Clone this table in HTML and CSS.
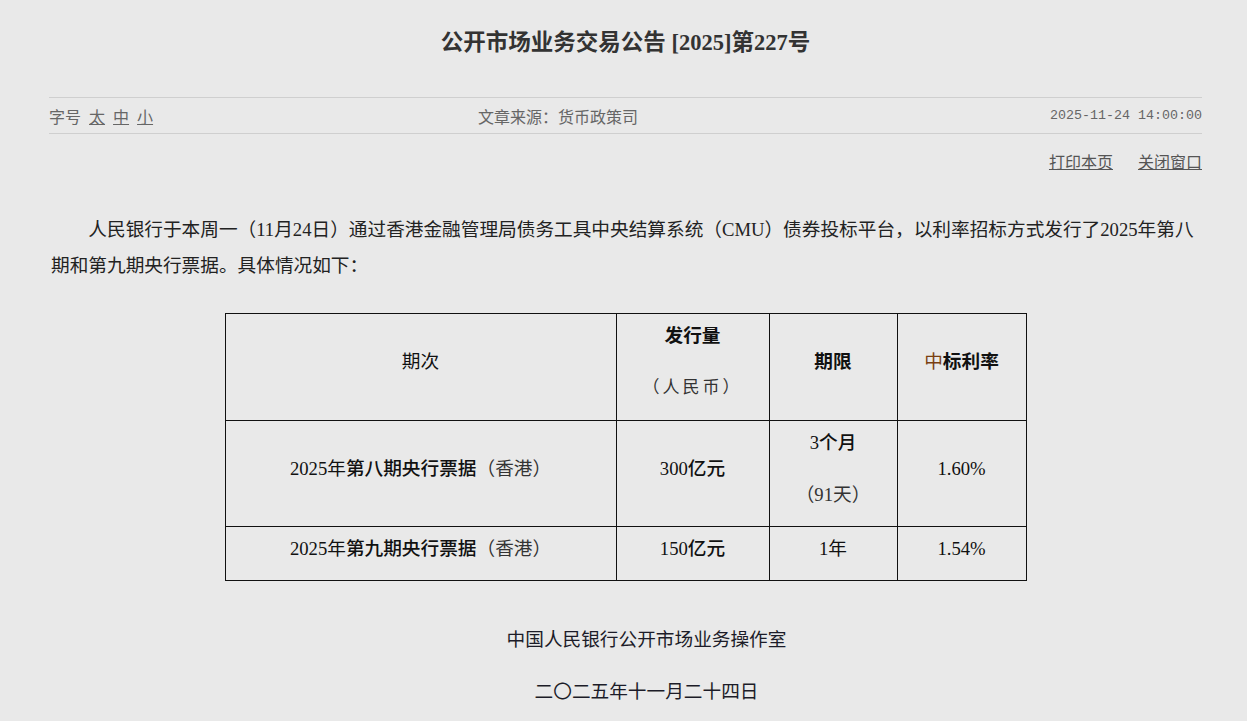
FILE: index.html
```html
<!DOCTYPE html>
<html lang="zh-CN">
<head>
<meta charset="utf-8">
<title>公开市场业务交易公告 [2025]第227号</title>
<link rel="stylesheet" href="styles.css">
</head>
<body>
<div class="page">
  <h1 class="title">公开市场业务交易公告 [2025]第227号</h1>
  <div class="meta">
    <div class="fontsize">字号<a class="fs">太</a><a class="fs">中</a><a class="fs">小</a></div>
    <div class="source">文章来源：货币政策司</div>
    <div class="date">2025-11-24 14:00:00</div>
  </div>
  <div class="tools"><a class="tool">打印本页</a><a class="tool">关闭窗口</a></div>
  <p class="content">人民银行于本周一（11月24日）通过香港金融管理局债务工具中央结算系统（CMU）债券投标平台，以利率招标方式发行了2025年第八期和第九期央行票据。具体情况如下：</p>
  <table class="grid">
    <colgroup>
      <col class="c1"><col class="c2"><col class="c3"><col class="c4">
    </colgroup>
    <tr class="r-head">
      <td><span class="line">期次</span></td>
      <td><span class="line head">发行量</span><span class="line spaced">（人民币）</span></td>
      <td><span class="line head">期限</span></td>
      <td><span class="line"><span class="brown">中</span><span class="head">标利率</span></span></td>
    </tr>
    <tr class="r-tall">
      <td><span class="line"><span class="num">2025</span>年<span class="strong">第八期央行票据</span><span class="soft">（香港）</span></span></td>
      <td><span class="line"><span class="num">300</span><span class="strong">亿元</span></span></td>
      <td><span class="line"><span class="num">3</span><span class="strong">个月</span></span><span class="line soft">（<span class="num">91</span>天）</span></td>
      <td><span class="line num">1.60%</span></td>
    </tr>
    <tr class="r-short">
      <td><span class="line"><span class="num">2025</span>年<span class="strong">第九期央行票据</span><span class="soft">（香港）</span></span></td>
      <td><span class="line"><span class="num">150</span><span class="strong">亿元</span></span></td>
      <td><span class="line"><span class="num">1</span>年</span></td>
      <td><span class="line num">1.54%</span></td>
    </tr>
  </table>
  <div class="sign">
    <p class="sign-line">中国人民银行公开市场业务操作室</p>
    <p class="sign-line">二〇二五年十一月二十四日</p>
  </div>
</div>
</body>
</html>
```

FILE: styles.css
```css
html, body {
  margin: 0;
  padding: 0;
  background: #e9e9e9;
}
body {
  font-family: "Liberation Serif", "Noto Sans CJK SC", serif;
  color: #222;
}
.page {
  padding: 0 45px 0 49px;
}
.title {
  margin: 0 0 39px;
  padding-top: 28px;
  font-size: 22.5px;
  line-height: 30px;
  font-weight: bold;
  text-align: center;
  color: #333;
}
.meta {
  display: grid;
  grid-template-columns: 429px 1fr auto;
  align-items: center;
  height: 35px;
  border-top: 1px solid #cfcfcf;
  border-bottom: 1px solid #cfcfcf;
  font-family: "Noto Sans CJK SC", sans-serif;
  font-size: 16px;
  color: #666;
}
.fs {
  margin-left: 8px;
  text-decoration: underline;
  color: #666;
}
.date {
  font-family: "Liberation Mono", monospace;
  font-size: 13.33px;
  color: #666;
}
.tools {
  display: flex;
  justify-content: flex-end;
  gap: 25px;
  margin-top: 16px;
  line-height: 22px;
  font-family: "Noto Sans CJK SC", sans-serif;
  font-size: 16px;
}
.tool {
  color: #555;
  text-decoration: underline;
}
.content {
  margin: 40px 0 0 2px;
  font-size: 18.67px;
  line-height: 36px;
  text-indent: 2em;
  color: #222;
}
.grid {
  margin: 29px auto 0;
  width: 801px;
  table-layout: fixed;
  border-collapse: collapse;
  font-size: 18.67px;
  color: #111;
}
.c1 { width: 391px; }
.c2 { width: 153px; }
.c3 { width: 128px; }
.c4 { width: 129px; }
.grid td {
  border: 1px solid #111;
  padding: 0 0 10px;
  text-align: center;
  vertical-align: middle;
}
.r-head td { height: 96px; }
.r-tall td { height: 95px; }
.r-short td { height: 43px; }
.line {
  display: block;
  line-height: 26px;
}
.line + .line {
  margin-top: 26px;
}
.head {
  font-weight: bold;
}
.strong {
  font-weight: 500;
}
.spaced {
  letter-spacing: 3px;
  font-size: 17px;
  color: #333;
}
.brown {
  color: #7a3f12;
}
.soft {
  color: #333;
}
.num {
  font-family: "Liberation Serif", serif;
}
.sign {
  margin-top: 33px;
  padding-left: 42px;
  text-align: center;
  font-size: 18.67px;
  color: #1c1c28;
}
.sign-line {
  margin: 0;
  line-height: 52px;
}
```
